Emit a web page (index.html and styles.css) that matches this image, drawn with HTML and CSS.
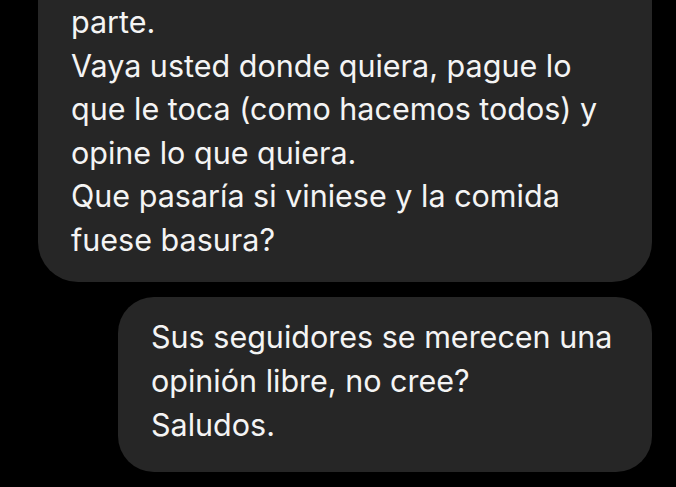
FILE: index.html
```html
<!DOCTYPE html>
<html lang="es">
<head>
<meta charset="utf-8">
<link rel="stylesheet" href="styles.css">
</head>
<body>
<div class="thread">
  <div class="bubble bubble-in">
    <p>parte.</p>
    <p>Vaya usted donde quiera, pague lo<br>que le toca (como hacemos todos) y<br>opine lo que quiera.</p>
    <p>Que pasaría si viniese y la comida<br>fuese basura?</p>
  </div>
  <div class="bubble bubble-out">
    <p>Sus seguidores se merecen una<br>opinión libre, no cree?</p>
    <p>Saludos.</p>
  </div>
</div>
</body>
</html>
```
FILE: styles.css
```css
html, body {
  margin: 0;
  padding: 0;
  background: #000;
}
body {
  width: 676px;
  height: 487px;
  overflow: hidden;
  font-family: Inter, "Noto Sans", sans-serif;
  color: #f4f4f4;
}
.thread {
  display: flex;
  flex-direction: column;
  padding: 0 24px 0 38px;
  gap: 15px;
}
.bubble {
  background: #262626;
  box-sizing: border-box;
  font-size: 30.5px;
  white-space: nowrap;
}
.bubble p {
  margin: 0;
}
.bubble-in {
  margin-top: -40px;
  padding: 40px 0 21px 33px;
  line-height: 43.5px;
  border-radius: 40px;
}
.bubble-out {
  align-self: flex-end;
  width: 534px;
  padding: 18px 0 25px 33px;
  line-height: 44px;
  border-radius: 36px;
}
```
